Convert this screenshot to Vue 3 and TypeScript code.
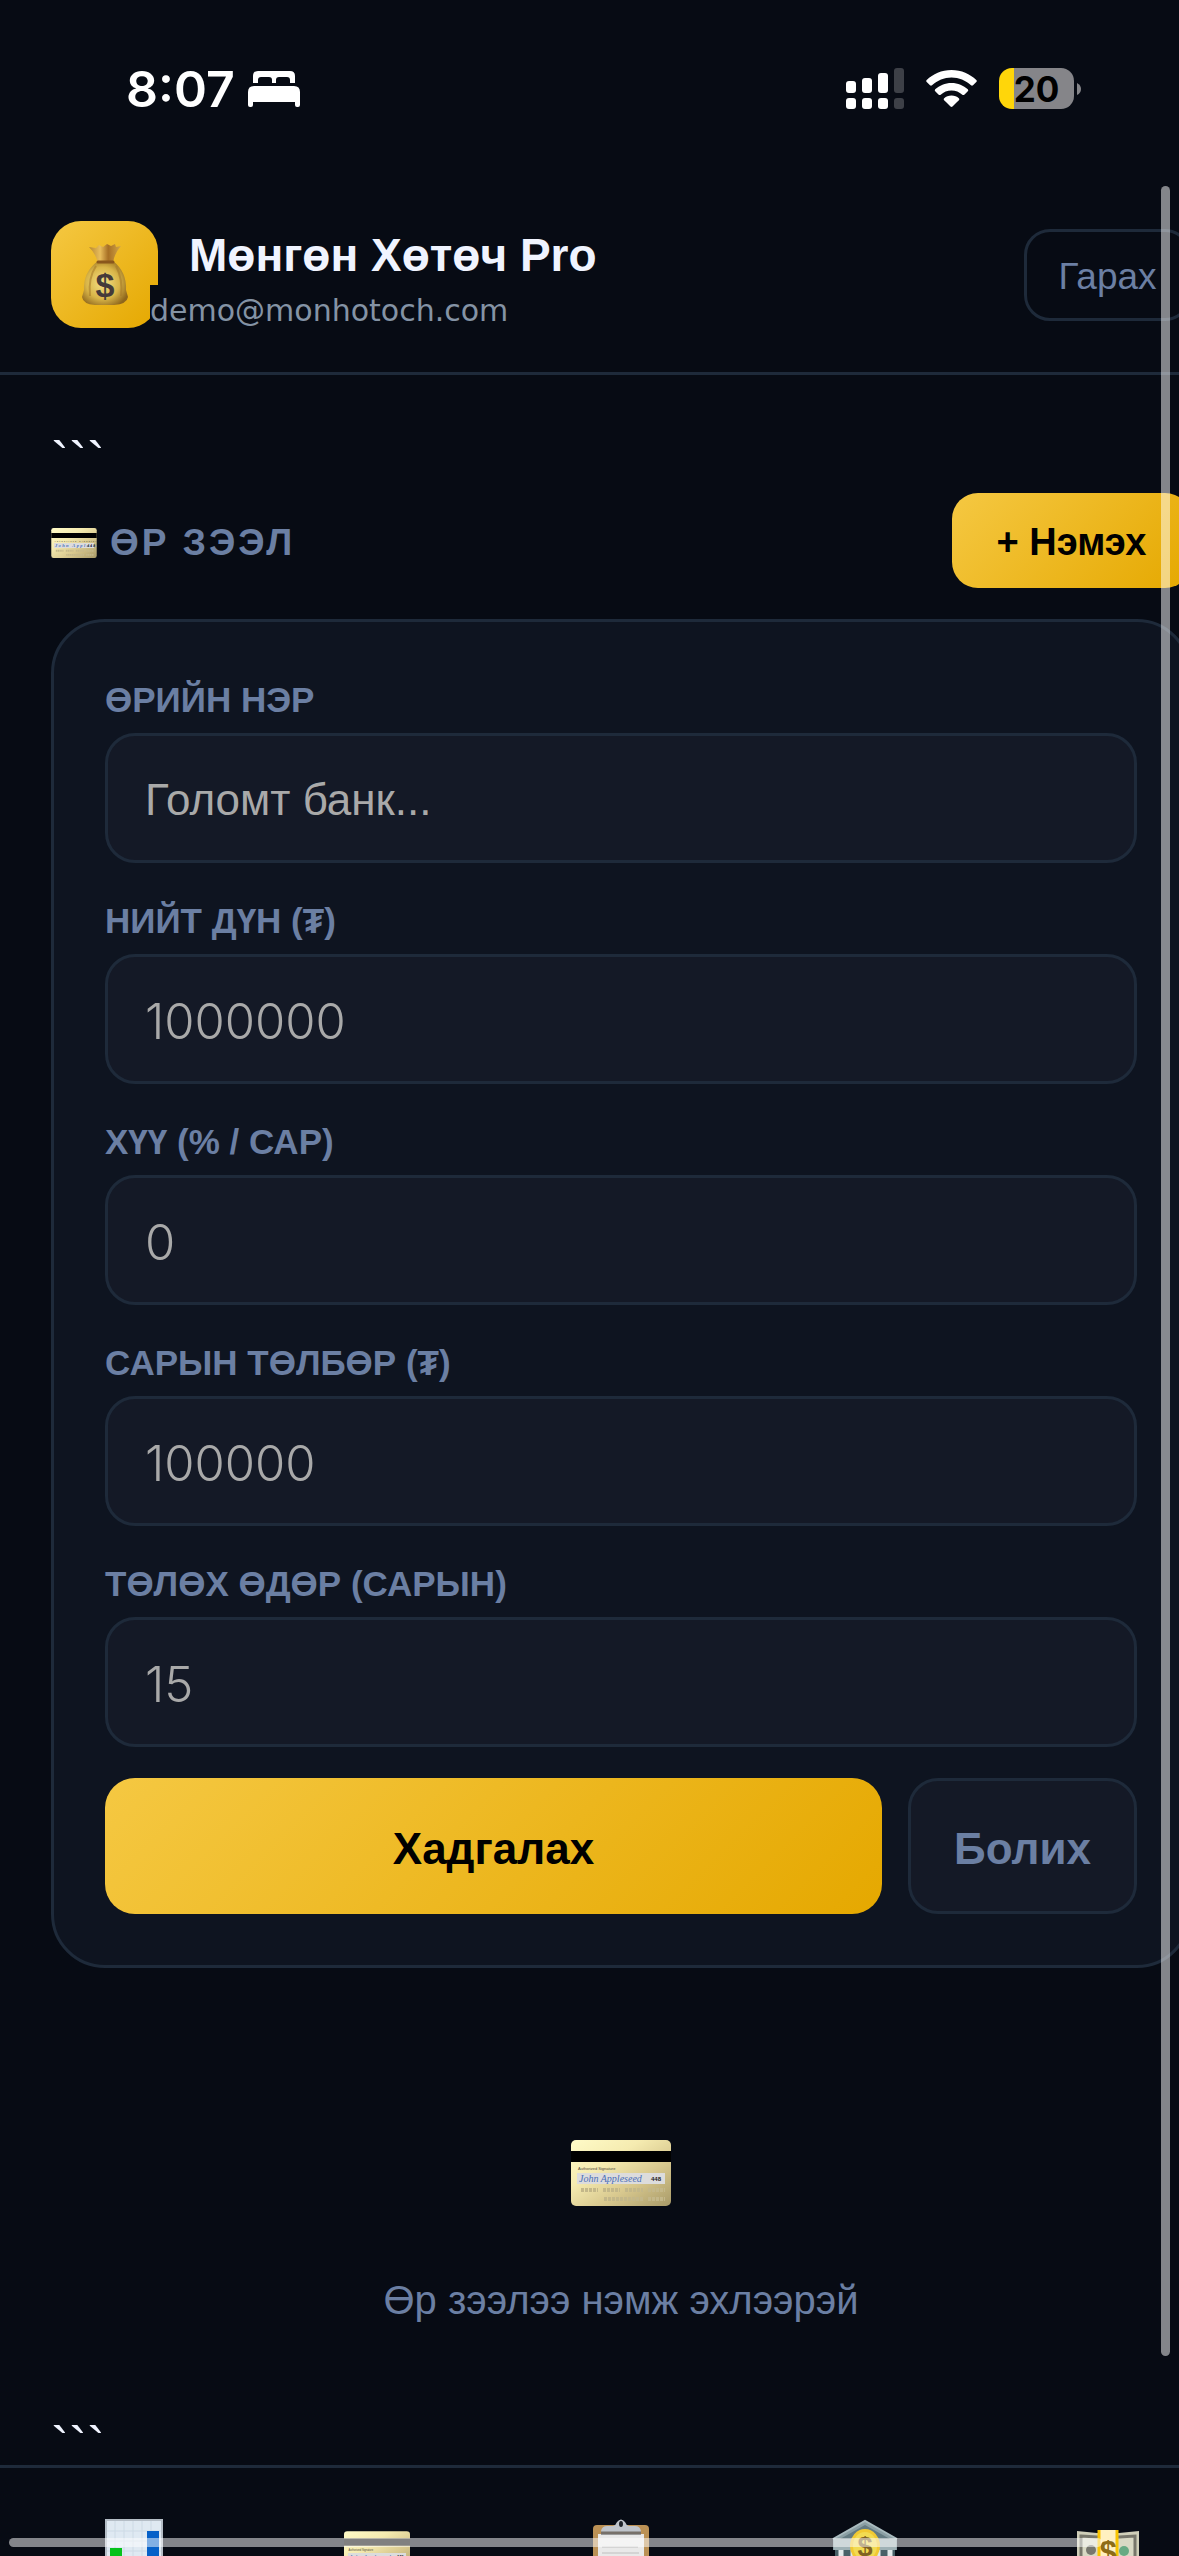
<script setup lang="ts">
import { ref } from 'vue'

interface Field {
  id: string
  label: string
  placeholder: string
  type: 'text' | 'number'
}

const fields: Field[] = [
  { id: 'debt-name', label: 'ӨРИЙН НЭР', placeholder: 'Голомт банк...', type: 'text' },
  { id: 'debt-total', label: 'НИЙТ ДҮН (₮)', placeholder: '1000000', type: 'number' },
  { id: 'debt-rate', label: 'ХҮҮ (% / САР)', placeholder: '0', type: 'number' },
  { id: 'debt-monthly', label: 'САРЫН ТӨЛБӨР (₮)', placeholder: '100000', type: 'number' },
  { id: 'debt-day', label: 'ТӨЛӨХ ӨДӨР (САРЫН)', placeholder: '15', type: 'number' },
]

const values = ref<Record<string, string>>({})
const fence = '```'
</script>

<template>
  <div class="screen">
    <svg class="defs" aria-hidden="true">
      <defs>
        <linearGradient id="card-gold" x1="0" y1="0" x2="1" y2="1">
          <stop offset="0" stop-color="#fffbc8" />
          <stop offset="0.35" stop-color="#f5ebb0" />
          <stop offset="0.65" stop-color="#d8c88e" />
          <stop offset="1" stop-color="#a89a68" />
        </linearGradient>
        <symbol id="credit-card" viewBox="0 0 100 66">
          <rect width="100" height="66" rx="5" fill="url(#card-gold)" />
          <rect y="11" width="100" height="11" fill="#000" />
          <text x="7" y="30" font-size="4" fill="#4b4738">Authorized Signature</text>
          <rect x="6" y="33" width="88" height="11" fill="#dcdcdc" />
          <text x="8" y="42" font-size="10" font-style="italic" font-family="Liberation Serif, serif" fill="#4a6fb8">John Appleseed</text>
          <text x="80" y="41" font-size="6" font-weight="700" fill="#222">448</text>
          <g stroke="#c4b88a" stroke-width="4" stroke-dasharray="3 1">
            <path d="M10 50h17M32 50h17M54 50h18M77 50h17M33 59h40M77 59h17" />
          </g>
        </symbol>
      </defs>
    </svg>

    <div class="status">
      <div class="status-left">
        <span class="time">8:07</span>
        <svg width="52" height="36" viewBox="0 0 52 36" fill="#fff" aria-hidden="true">
          <path d="M5 12V5q0-5 5-5h32q5 0 5 5v7h-5V9q0-3-3-3h-8q-3 0-3 3v3h-4V9q0-3-3-3h-8q-3 0-3 3v3z" />
          <path d="M0 34V21q0-6 6-6h40q6 0 6 6v13q0 2-2 2h-1q-2 0-2-2v-3H5v3q0 2-2 2H2q-2 0-2-2z" />
        </svg>
      </div>
      <div class="status-right">
        <svg width="58" height="42" viewBox="0 0 58 42" fill="#fff" aria-hidden="true">
          <rect x="0" y="13" width="10" height="12" rx="3" />
          <rect x="16" y="10" width="10" height="15" rx="3" />
          <rect x="32" y="5" width="10" height="20" rx="3" />
          <rect x="48" y="0" width="10" height="25" rx="3" opacity=".22" />
          <rect x="0" y="30" width="10" height="11" rx="3" />
          <rect x="16" y="30" width="10" height="11" rx="3" />
          <rect x="32" y="30" width="10" height="11" rx="3" />
          <rect x="48" y="30" width="10" height="11" rx="3" opacity=".22" />
        </svg>
        <svg width="51" height="37" viewBox="0 0 51 37" fill="#fff" aria-hidden="true">
          <path d="M25.500 0C35.500 0 44 4 50.300 10q1 1 0 2l-3.300 3.300q-1 .8-2 0C39.500 10.500 33 7.600 25.500 7.600S11.500 10.500 6 15.300q-1 .8-2 0L.7 12q-1-1 0-2C7 4 15.500 0 25.500 0z" />
          <path d="M25.500 13C32 13 37.500 15.500 41.800 19.300q1 1 0 2L38.300 24.700q-1 .8-2 0C33.300 22 29.700 20.500 25.500 20.500S17.700 22 14.700 24.700q-1 .8-2 0L9.200 21.300q-1-1 0-2C13.500 15.500 19 13 25.500 13z" />
          <path d="M25.500 25.500c3 0 5.500 1 7.300 2.700q1 1 0 2L26.500 36.500q-1 .8-2 0L18.200 30.200q-1-1 0-2c1.800-1.700 4.300-2.700 7.300-2.700z" />
        </svg>
        <div class="battery-wrap">
          <div class="battery"><span>20</span></div>
          <svg width="4" height="12" viewBox="0 0 4 12" aria-hidden="true"><path d="M0 0q4 2 4 6t-4 6z" fill="#858589" /></svg>
        </div>
      </div>
    </div>

    <header class="header">
      <div class="brand">
        <div class="logo">
          <svg width="46" height="61" viewBox="0 0 46 61" aria-hidden="true">
            <defs>
              <radialGradient id="bag" cx=".45" cy=".5" r=".6">
                <stop offset="0" stop-color="#f3e086" />
                <stop offset=".6" stop-color="#d9b548" />
                <stop offset="1" stop-color="#8e661c" />
              </radialGradient>
              <linearGradient id="neck">
                <stop offset="0" stop-color="#b9892f" />
                <stop offset=".35" stop-color="#e8bd5c" />
                <stop offset=".6" stop-color="#a76f24" />
                <stop offset="1" stop-color="#d3a848" />
              </linearGradient>
            </defs>
            <path d="M7 3l7 1 3-3 4 2 4-3 4 2 4-2 1 3 5-1q-7 8-8 17H16Q14 10 7 3z" fill="url(#neck)" />
            <path d="M16 17h15q14 11 13 29l2 7q-1 7-14 8H13Q1 60 0 53l2-7Q1 28 16 17z" fill="url(#bag)" />
            <path d="M16 18h15" stroke="#8a571c" stroke-width="3" stroke-linecap="round" />
            <path d="M14 22Q6 34 8 52M34 22q7 13 5 30" stroke="#a77c2a" stroke-width="2" fill="none" opacity=".6" />
            <text x="23" y="53" font-size="34" font-weight="700" text-anchor="middle" fill="#443a3a">$</text>
          </svg>
        </div>
        <div class="brand-text">
          <h1>Мөнгөн Хөтөч Pro</h1>
          <span class="email">demo@monhotoch.com</span>
        </div>
      </div>
      <button type="button" class="logout">Гарах</button>
    </header>

    <main class="main">
      <p class="fence">{{ fence }}</p>
      <div class="section-head">
        <h2><svg class="mini-card" aria-hidden="true"><use href="#credit-card" /></svg>ӨР ЗЭЭЛ</h2>
        <button type="button" class="gold add">+ Нэмэх</button>
      </div>

      <form class="card" @submit.prevent>
        <div v-for="f in fields" :key="f.id" class="field">
          <label :for="f.id">{{ f.label }}</label>
          <input :id="f.id" v-model="values[f.id]" :type="f.type" :placeholder="f.placeholder" />
        </div>
        <div class="actions">
          <button type="submit" class="gold save">Хадгалах</button>
          <button type="button" class="cancel">Болих</button>
        </div>
      </form>

      <div class="empty">
        <svg class="big-card" aria-hidden="true"><use href="#credit-card" /></svg>
        <p>Өр зээлээ нэмж эхлээрэй</p>
      </div>
      <p class="fence">{{ fence }}</p>
    </main>

    <nav class="nav">
      <a href="#dashboard" aria-label="Dashboard">
        <svg width="66" height="66" viewBox="0 0 66 66">
          <rect x="5" y="1" width="56" height="64" fill="#dfe9f2" />
          <path d="M5 1h56v64H5z" fill="none" stroke="#b4bdc6" stroke-width="2" />
          <path d="M14 2v62M23 2v62M32 2v62M41 2v62M50 2v62M6 12h54M6 22h54M6 32h54" stroke="#cddae5" />
          <rect x="9" y="29" width="12" height="36" fill="#06c21b" />
          <rect x="27" y="42" width="13" height="23" fill="#c92a2a" />
          <rect x="46" y="12" width="12" height="53" fill="#0560c8" />
        </svg>
      </a>
      <a href="#debts" aria-label="Debts">
        <svg width="66" height="66" viewBox="0 0 66 66"><use href="#credit-card" x="0" y="12" width="66" height="44" /></svg>
      </a>
      <a href="#plans" aria-label="Plans">
        <svg width="66" height="66" viewBox="0 0 66 66">
          <rect x="5" y="6" width="56" height="60" rx="4" fill="#bb9155" />
          <rect x="10" y="15" width="46" height="50" fill="#e9e9e9" />
          <path d="M13 16V12q1-5 6-5h6q3-1 4-4 4-5 8 0 1 3 4 4h6q5 0 6 5v4z" fill="#bfc4cb" />
          <path d="M13 14h40" stroke="#77706a" stroke-width="3" />
          <ellipse cx="33" cy="5" rx="2" ry="3" fill="#20242b" />
          <path d="M14 28h36M14 34h37M14 40h38" stroke="#d4d4d4" stroke-width="2" />
        </svg>
      </a>
      <a href="#bank" aria-label="Bank">
        <svg width="66" height="66" viewBox="0 0 66 66">
          <path d="M33 2L1 20v11h64V20z" fill="#8b9fa4" />
          <path d="M33 6L8 20h50z" fill="#647b82" />
          <path d="M1 20L33 2l32 18" fill="none" stroke="#a9bbbf" stroke-width="2" />
          <rect x="2" y="20" width="62" height="11" fill="#9fb1b5" />
          <rect x="3" y="31" width="60" height="35" fill="#496168" />
          <path d="M9 31v34M21 31v34M46 31v34M58 31v34" stroke="#e1e9ea" stroke-width="5" />
          <ellipse cx="33" cy="27" rx="15" ry="17" fill="#f1c932" />
          <ellipse cx="33" cy="27" rx="12" ry="14" fill="#f2db52" />
          <text x="33" y="37" font-size="27" font-weight="700" text-anchor="middle" fill="#806324">$</text>
        </svg>
      </a>
      <a href="#income" aria-label="Income">
        <svg width="66" height="66" viewBox="0 0 66 66">
          <path d="M2 12l20 2h22l20-2v44H2z" fill="#cfceb8" />
          <path d="M6 17l16 1h22l16-1v34H6z" fill="#d9d9c4" stroke="#77766a" stroke-width="3" />
          <circle cx="16" cy="31" r="5" fill="#77776e" />
          <circle cx="49" cy="32" r="5" fill="#67aa83" />
          <rect x="23" y="11" width="20" height="48" fill="#fff0c0" />
          <path d="M24 11v48M42 11v48" stroke="#f9c400" stroke-width="3" />
          <text x="33" y="44" font-size="31" font-weight="700" text-anchor="middle" fill="#8d6c16">$</text>
        </svg>
      </a>
    </nav>

    <div class="thumb thumb-y" aria-hidden="true"></div>
    <div class="thumb thumb-x" aria-hidden="true"></div>
  </div>
</template>

<style>
html,
body {
  margin: 0;
  background: #070b14;
  overflow: hidden;
}
</style>

<style scoped>
* {
  box-sizing: border-box;
}

.screen {
  position: relative;
  display: flex;
  flex-direction: column;
  height: 100vh;
  overflow: hidden;
  background: #070b14;
  color: #f0f4ff;
  font-family: "Liberation Sans", Arial, sans-serif;
}

.defs {
  position: absolute;
  width: 0;
  height: 0;
}

h1,
h2,
p {
  margin: 0;
}

svg {
  display: block;
  flex: none;
}

button,
input {
  font-family: inherit;
}

.status {
  flex: none;
  display: flex;
  justify-content: space-between;
  align-items: center;
  height: 177px;
  padding: 0 98px 0 126px;
  font-family: Inter, sans-serif;
}

.status-left {
  display: flex;
  align-items: center;
  gap: 13px;
}

.time {
  font-size: 50px;
  font-weight: 600;
  color: #fff;
}

.status-right {
  display: flex;
  align-items: center;
  gap: 22px;
}

.battery-wrap {
  display: flex;
  align-items: center;
  gap: 3px;
}

.battery {
  display: flex;
  align-items: center;
  justify-content: center;
  width: 75px;
  height: 41px;
  border-radius: 13px;
  background: linear-gradient(90deg, #ffd60a 20%, #858589 20%);
  color: #000;
  font-size: 35px;
  font-weight: 700;
}

.header {
  flex: none;
  display: flex;
  justify-content: space-between;
  align-items: center;
  width: calc(100% + 63px);
  height: 198px;
  padding: 0 51px;
  border-bottom: 3px solid #1e2a3a;
}

.brand {
  display: flex;
}

.logo {
  display: flex;
  align-items: center;
  justify-content: center;
  width: 107px;
  height: 107px;
  border-radius: 30px;
  background: linear-gradient(135deg, #f5c842, #e5a800);
}

.brand-text {
  display: flex;
  flex-direction: column;
  align-items: flex-start;
  margin-left: -8px;
}

h1 {
  padding: 4px 0 0 39px;
  font-size: 46px;
  line-height: 60px;
}

.email {
  position: relative;
  padding-top: 8px;
  background: #070b14;
  color: #8493a5;
  font-family: "DejaVu Sans", sans-serif;
  font-size: 30px;
  line-height: 35px;
}

.logout {
  width: 167px;
  height: 92px;
  padding: 4px 0 0;
  border: 3px solid #1e2a3a;
  border-radius: 26px;
  background: transparent;
  color: #6b7fa3;
  font-size: 37px;
}

.main {
  flex: 1;
  min-height: 0;
  width: calc(100% + 63px);
  padding: 54px 51px 0;
}

.fence {
  font-size: 54px;
  line-height: 64px;
}

.section-head {
  display: flex;
  justify-content: space-between;
  align-items: center;
  margin-bottom: 31px;
}

h2 {
  display: flex;
  align-items: center;
  gap: 13px;
  padding-top: 4px;
  color: #6b7fa3;
  font-size: 37px;
  letter-spacing: 3px;
}

.mini-card {
  width: 46px;
  height: 30px;
}

.gold {
  border: 0;
  background: linear-gradient(135deg, #f5c842, #e5a800);
  color: #000;
  font-weight: 700;
}

.add {
  width: 239px;
  height: 95px;
  padding: 4px 0 0;
  border-radius: 26px;
  font-size: 38px;
}

.card {
  padding: 51px;
  border: 3px solid #1e2a3a;
  border-radius: 54px;
  background: #0e1420;
}

.field {
  display: flex;
  flex-direction: column;
  gap: 6px;
  margin-bottom: 31px;
}

label {
  color: #6b7fa3;
  font-size: 35px;
  font-weight: 700;
  line-height: 54px;
}

input {
  width: 100%;
  height: 130px;
  padding: 4px 37px 0;
  border: 3px solid #1e2a3a;
  border-radius: 30px;
  outline: 0;
  background: #141926;
  color: #f0f4ff;
  font-size: 44px;
  appearance: textfield;
}

input[type="number"] {
  font-family: Inter, sans-serif;
  font-weight: 300;
  font-size: 49px;
}

input::placeholder {
  color: #a9a9a9;
  opacity: 1;
}

.actions {
  display: flex;
  gap: 26px;
}

.actions button {
  height: 136px;
  padding: 6px 0 0;
  border-radius: 30px;
  font-size: 44px;
  font-weight: 700;
}

.save {
  flex: 1;
}

.cancel {
  width: 229px;
  border: 3px solid #1e2a3a;
  background: #141926;
  color: #6b7fa3;
}

.empty {
  display: flex;
  flex-direction: column;
  align-items: center;
  gap: 64px;
  padding: 172px 0 84px;
  color: #6b7fa3;
  font-size: 40px;
  line-height: 60px;
}

.big-card {
  width: 100px;
  height: 66px;
}

.nav {
  position: relative;
  flex: none;
  display: flex;
  width: calc(100% + 63px);
  height: 91px;
  padding: 51px 12px 0;
  border-top: 3px solid #1e2a3a;
  overflow: hidden;
}

.nav a {
  flex: 1;
  display: flex;
  justify-content: center;
}

.thumb {
  position: absolute;
  border-radius: 5px;
  background: rgba(255, 255, 255, 0.5);
}

.thumb-y {
  top: 186px;
  right: 9px;
  bottom: 200px;
  width: 9px;
}

.thumb-x {
  left: 9px;
  right: 77px;
  bottom: 9px;
  height: 9px;
}
</style>
